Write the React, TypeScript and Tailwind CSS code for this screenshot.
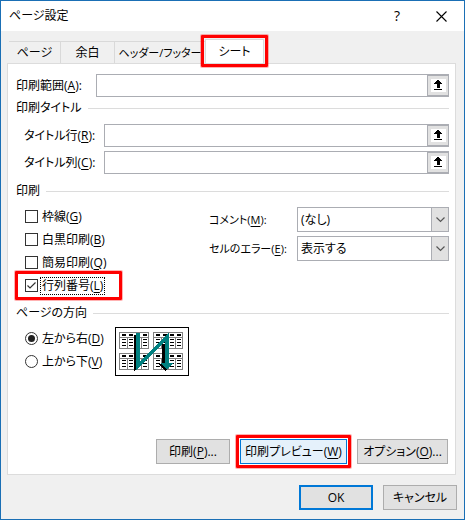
import type { ReactNode } from "react";

function Key({ text, k, tail = "" }: { text: string; k: string; tail?: string }) {
  return (
    <span className="whitespace-nowrap">
      {text}(<u className="underline-offset-2">{k}</u>){tail}
    </span>
  );
}

function Highlight({ children, className = "" }: { children: ReactNode; className?: string }) {
  return (
    <div className={`relative ${className}`}>
      {children}
      <div className="pointer-events-none absolute -inset-1 z-10 rounded-[1px] border-3 border-[#ff0000] ring-1 ring-[#ff0000]/30" />
    </div>
  );
}

function RangeField({ id, text, k, className }: { id: string; text: string; k: string; className: string }) {
  return (
    <div className="flex items-center">
      <label htmlFor={id} className={`shrink-0 ${className}`}>
        <Key text={text} k={k} tail=":" />
      </label>
      <div className="flex h-[23px] min-w-0 flex-1 border border-[#abadb3]">
        <input id={id} type="text" className="min-w-0 flex-1 px-1 outline-none" />
        <button
          type="button"
          aria-label={`${text}を選択`}
          className="flex w-[21px] items-center justify-center border border-r-0 border-[#abadb3] bg-[#e1e1e1]"
        >
          <svg width="15" height="13" viewBox="0 0 15 13" shapeRendering="crispEdges" className="shrink-0">
            <path fill="#fff" d="M0 0h15v13H0z" />
            <path d="M6 1h2v1h1v1h1v1h1v1H9v4H6V5H3V4h1V3h1V2h1zM3 10h8v1H3z" />
          </svg>
        </button>
      </div>
    </div>
  );
}

function Section({ title, children }: { title: string; children: ReactNode }) {
  return (
    <section>
      <div className="flex items-center gap-1.5">
        <h2>{title}</h2>
        <div className="h-px flex-1 bg-[#dcdcdc]" />
      </div>
      {children}
    </section>
  );
}

function CheckOption({
  text,
  k,
  checked = false,
  className = "h-[23px]",
}: {
  text: string;
  k: string;
  checked?: boolean;
  className?: string;
}) {
  return (
    <label className={`flex items-center ${className}`}>
      <span className="relative size-[13px]">
        <input
          type="checkbox"
          defaultChecked={checked}
          className="peer block size-[13px] appearance-none border border-[#333] bg-white"
        />
        <svg
          viewBox="0 0 13 13"
          className="pointer-events-none absolute inset-0 hidden peer-checked:block"
          fill="none"
          stroke="#333"
          strokeWidth="1.2"
        >
          <path d="M2.5 6.5 5 9l5.5-5.5" />
        </svg>
      </span>
      <span className={`ml-0.5 border border-dotted px-px leading-4 ${checked ? "border-black" : "border-transparent"}`}>
        <Key text={text} k={k} />
      </span>
    </label>
  );
}

function SelectField({ id, text, k, value }: { id: string; text: string; k: string; value: string }) {
  return (
    <div className="flex items-center">
      <label htmlFor={id} className="w-[88px] shrink-0 text-[11px]">
        <Key text={text} k={k} tail=":" />
      </label>
      <div className="relative min-w-0 flex-1">
        <select id={id} className="block h-[25px] w-full appearance-none border border-[#abadb3] bg-white pl-[3px] outline-none">
          <option>{value}</option>
        </select>
        <span className="pointer-events-none absolute inset-y-0 right-0 flex w-[18px] items-center justify-center border border-[#abadb3] bg-[#e1e1e1]">
          <svg width="9" height="6" viewBox="0 0 9 6" fill="none" stroke="#555" strokeWidth="1.2">
            <path d="m.5.5 4 4 4-4" />
          </svg>
        </span>
      </div>
    </div>
  );
}

function RadioOption({ text, k, checked = false }: { text: string; k: string; checked?: boolean }) {
  return (
    <label className="flex h-[23px] items-center gap-1">
      <span className="relative size-[13px]">
        <input
          type="radio"
          name="order"
          defaultChecked={checked}
          className="peer block size-[13px] appearance-none rounded-full border border-[#333] bg-white"
        />
        <span className="pointer-events-none absolute inset-[3px] hidden rounded-full bg-[#222] peer-checked:block" />
      </span>
      <Key text={text} k={k} />
    </label>
  );
}

function OrderDiagram() {
  return (
    <svg width="74" height="49" viewBox="0 0 74 49" shapeRendering="crispEdges">
      <path fill="#fff" stroke="#000" d="M.5.5h73v48H.5z" />
      {[[4, 5], [38, 5], [4, 26], [38, 26]].map(([x, y]) => (
        <g key={`${x}-${y}`} transform={`translate(${x} ${y})`}>
          <path fill="none" stroke="#808080" d="M.5.5h29v16H.5zM0 5.5h30M8.5 5v12M15.5 5v12M22.5 5v12" />
          <path d="M3 2h4v2H3zM10 2h4v2h-4zM17 2h4v2h-4zM24 2h4v2h-4z" />
          {[3, 10, 17, 24].map((col) => (
            <path key={col} stroke="#000" d={`M${col} 7.5h4m-4 3h4m-4 3h4`} />
          ))}
        </g>
      ))}
      <path d="M19 8h2v34l-2 2zM47 17h3v22h-3zM44 37h4l4 6-2 1z" />
      <path fill="#008080" d="M21 6h4v28L54 6v30h4l-6 7-6-7h4V14L21 43z" />
    </svg>
  );
}

const button = "h-[25px] border border-[#adadad] bg-[#e1e1e1] text-center whitespace-nowrap";

export default function App() {
  return (
    <main className="flex min-h-screen flex-col border border-[#1a6fb5] bg-[#f0f0f0] font-['Open_Sans','Noto_Sans_CJK_JP',sans-serif] text-xs leading-4 text-black [font-feature-settings:'palt']">
      <header className="flex h-[30px] items-center bg-white pr-[17px] pl-2">
        <h1 className="flex-1">ページ設定</h1>
        <button type="button" aria-label="ヘルプ" className="mr-9 text-sm">?</button>
        <button type="button" aria-label="閉じる">
          <svg width="11" height="11" viewBox="0 0 11 11" stroke="#000" strokeWidth="1.1">
            <path d="m.5.5 10 10m0-10-10 10" />
          </svg>
        </button>
      </header>

      <div className="flex flex-1 flex-col px-1.5 pt-2">
        <nav className="flex items-end pl-0.5">
          <button type="button" className="h-[22px] w-[52px] border-t border-r border-[#d9d9d9]">ページ</button>
          <button type="button" className="h-[22px] w-[54px] border-t border-r border-[#d9d9d9]">余白</button>
          <button type="button" className="h-[22px] w-[90px] border-t border-[#d9d9d9] text-[11px] whitespace-nowrap">ヘッダー/フッター</button>
          <Highlight>
            <button type="button" className="block h-6 w-[59px] border border-b-0 border-[#d9d9d9] bg-white">シート</button>
          </Highlight>
        </nav>

        <div className="mr-[2px] flex flex-1 flex-col border border-[#dcdcdc] bg-white pt-2.5 pr-1.5 pb-2.5 pl-2">
          <RangeField id="area" text="印刷範囲" k="A" className="w-20" />
          <div className="mt-[3px]">
            <Section title="印刷タイトル">
              <div className="mt-2 flex flex-col gap-1 pl-2">
                <RangeField id="rows" text="タイトル行" k="R" className="w-20" />
                <RangeField id="cols" text="タイトル列" k="C" className="w-20" />
              </div>
            </Section>
          </div>

          <div className="mt-[9px]">
            <Section title="印刷">
              <div className="mt-1.5 flex pl-[9px]">
                <div className="w-[184px] shrink-0">
                  <CheckOption text="枠線" k="G" />
                  <CheckOption text="白黒印刷" k="B" />
                  <CheckOption text="簡易印刷" k="Q" />
                  <Highlight className="-mx-1.5 my-px w-[99px] px-1.5">
                    <CheckOption text="行列番号" k="L" checked className="h-[21px]" />
                  </Highlight>
                </div>
                <div className="mt-0.5 flex min-w-0 flex-1 flex-col gap-1">
                  <SelectField id="comments" text="コメント" k="M" value="(なし)" />
                  <SelectField id="errors" text="セルのエラー" k="E" value="表示する" />
                </div>
              </div>
            </Section>
          </div>

          <div className="mt-2">
            <Section title="ページの方向">
              <div className="mt-1.5 flex gap-3 pl-[9px]">
                <div className="w-[78px]">
                  <RadioOption text="左から右" k="D" checked />
                  <RadioOption text="上から下" k="V" />
                </div>
                <OrderDiagram />
              </div>
            </Section>
          </div>

          <div className="mt-auto flex justify-end gap-2.5 pr-px">
            <button type="button" className={`${button} w-[74px]`}>
              <Key text="印刷" k="P" tail="..." />
            </button>
            <Highlight>
              <button type="button" className="block h-[25px] w-[107px] border border-[#0078d7] bg-[#e5f1fb] whitespace-nowrap">
                <Key text="印刷プレビュー" k="W" />
              </button>
            </Highlight>
            <button type="button" className={`${button} w-[91px]`}>
              <Key text="オプション" k="O" tail="..." />
            </button>
          </div>
        </div>
      </div>

      <footer className="flex justify-end gap-2.5 px-[7px] pt-2.5 pb-[9px]">
        <button type="submit" className="h-[25px] w-[74px] border-2 border-[#0078d7] bg-[#e1e1e1]">OK</button>
        <button type="button" className={`${button} w-[74px]`}>キャンセル</button>
      </footer>
    </main>
  );
}
